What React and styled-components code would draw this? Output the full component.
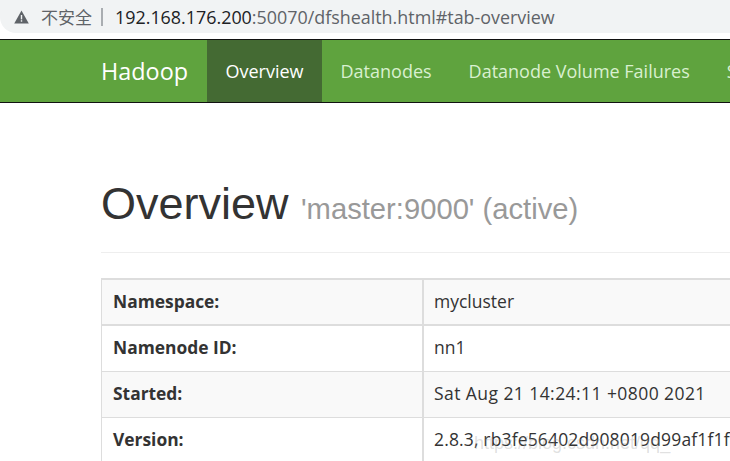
import { Fragment } from "react";
import styled, { createGlobalStyle } from "styled-components";

const GlobalStyle = createGlobalStyle`
  html, body {
    margin: 0;
    padding: 0;
    height: 461px;
    overflow: hidden;
    background: #fff;
  }
`;

const Page = styled.div`
  position: relative;
  width: 730px;
  height: 461px;
  overflow: hidden;
  font-family: "Open Sans", "Noto Sans", sans-serif;
  color: #333;
`;

const AddressBar = styled.div`
  display: flex;
  align-items: center;
  height: 33px;
  margin-bottom: 6px;
  padding-left: 14px;
  background: #f1f3f4;
  border-bottom-left-radius: 16px;
  font-size: 17.9px;
  white-space: nowrap;
`;

const Insecure = styled.span`
  margin-left: 12px;
  font-family: "Noto Sans CJK SC", sans-serif;
  font-size: 17px;
  color: #5f6368;
`;

const Divider = styled.span`
  width: 2px;
  height: 18px;
  margin: 0 12px 0 9px;
  background: #a9adb1;
`;

const Host = styled.span`
  color: #202124;
`;

const UrlRest = styled.span`
  color: #5f6368;
`;

const Navbar = styled.nav`
  display: flex;
  align-items: stretch;
  height: 62px;
  padding-left: 101px;
  background: #5fa33e;
  border-top: 1px solid #111;
  border-bottom: 1px solid #111;
  white-space: nowrap;
`;

const Brand = styled.div`
  display: flex;
  align-items: center;
  flex: 0 0 106px;
  font-size: 23.4px;
  color: #fff;
`;

const NavItem = styled.div`
  display: flex;
  flex-shrink: 0;
  align-items: center;
  padding: 0 18.5px;
  font-size: 18px;
  color: ${({ $active }) => ($active ? "#fff" : "#d9f0d0")};
  background: ${({ $active }) => ($active ? "#446a33" : "transparent")};
`;

const Content = styled.main`
  padding: 0 0 0 101px;
`;

const Header = styled.header`
  height: 150px;
  margin-bottom: 25px;
  border-bottom: 1px solid #eee;
  box-sizing: border-box;
  padding-top: 76px;
  font-family: "Liberation Sans", Arial, sans-serif;
  white-space: nowrap;
`;

const Title = styled.h1`
  margin: 0;
  font-size: 45px;
  font-weight: 400;
  line-height: 1.1;
  color: #333;
`;

const Subtitle = styled.small`
  font-size: 29.2px;
  color: #999;
`;

const Table = styled.div`
  display: grid;
  grid-template-columns: 322px 1fr;
  width: 680px;
  border-top: 2px solid #ddd;
  border-left: 1px solid #ddd;
`;

const Label = styled.div`
  display: flex;
  align-items: center;
  box-sizing: border-box;
  height: 46px;
  padding: 0 0 3px 11px;
  font-size: 17.4px;
  font-weight: 700;
  color: #333;
  background: ${({ $striped }) => ($striped ? "#f9f9f9" : "#fff")};
  border-bottom: ${({ $thick }) => ($thick ? 2 : 1)}px solid #ddd;
  border-right: 2px solid #ddd;
`;

const Value = styled.div`
  display: flex;
  align-items: center;
  box-sizing: border-box;
  height: 46px;
  padding: 0 0 3px 10px;
  font-size: 17.5px;
  letter-spacing: ${({ $spacing }) => $spacing || 0}px;
  color: #333;
  white-space: nowrap;
  background: ${({ $striped }) => ($striped ? "#f9f9f9" : "#fff")};
  border-bottom: ${({ $thick }) => ($thick ? 2 : 1)}px solid #ddd;
`;

const Watermark = styled.span`
  position: absolute;
  left: 474px;
  top: 433px;
  font-family: "Liberation Sans", Arial, sans-serif;
  font-size: 18px;
  color: rgba(150, 150, 150, 0.3);
  white-space: nowrap;
`;

const WarningIcon = () => (
  <svg width="15" height="14" viewBox="0 0 15 14">
    <path d="M7.5 0.5 L14.8 13.5 H0.2 Z" fill="#5f6368" />
    <rect x="6.8" y="5" width="1.4" height="4.4" fill="#f1f3f4" />
    <rect x="6.8" y="10.2" width="1.4" height="1.5" fill="#f1f3f4" />
  </svg>
);

const rows = [
  { label: "Namespace:", value: "mycluster", striped: true, thick: true },
  { label: "Namenode ID:", value: "nn1" },
  { label: "Started:", value: "Sat Aug 21 14:24:11 +0800 2021", striped: true, spacing: 0.43 },
  { label: "Version:", value: "2.8.3, rb3fe56402d908019d99af1f1f", spacing: 0.15 },
];

const App = () => {
  return (
    <Page>
      <GlobalStyle />
      <AddressBar>
        <WarningIcon />
        <Insecure>不安全</Insecure>
        <Divider />
        <Host>192.168.176.200</Host>
        <UrlRest>:50070/dfshealth.html#tab-overview</UrlRest>
      </AddressBar>
      <Navbar>
        <Brand>Hadoop</Brand>
        <NavItem $active>Overview</NavItem>
        <NavItem>Datanodes</NavItem>
        <NavItem>Datanode Volume Failures</NavItem>
        <NavItem>Snapshot</NavItem>
      </Navbar>
      <Content>
        <Header>
          <Title>
            Overview <Subtitle>'master:9000' (active)</Subtitle>
          </Title>
        </Header>
        <Table>
          {rows.map((row) => (
            <Fragment key={row.label}>
              <Label $striped={row.striped} $thick={row.thick}>{row.label}</Label>
              <Value $striped={row.striped} $thick={row.thick} $spacing={row.spacing}>{row.value}</Value>
            </Fragment>
          ))}
        </Table>
      </Content>
      <Watermark>https://blog.csdn.net/qq_</Watermark>
    </Page>
  );
};

export default App;
